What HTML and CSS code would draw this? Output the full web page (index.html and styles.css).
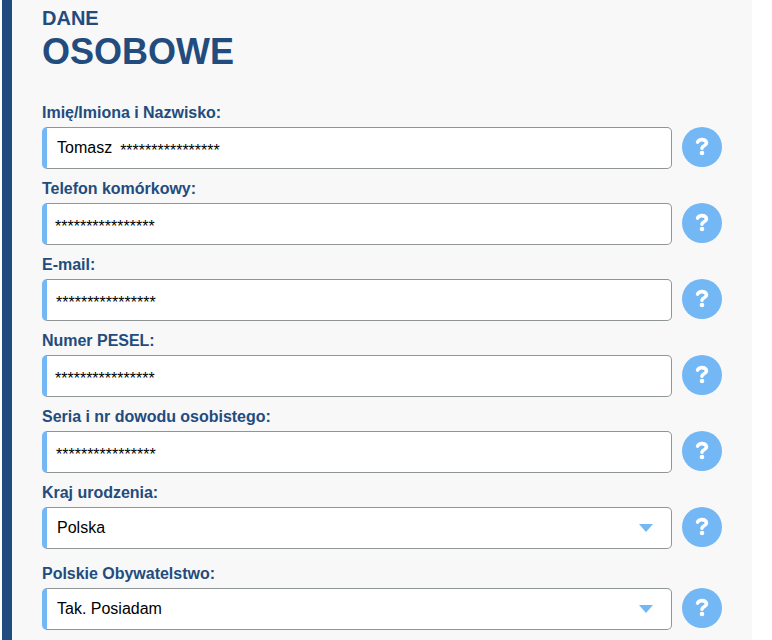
FILE: index.html
```
<!DOCTYPE html>
<html lang="pl">
<head>
<meta charset="utf-8">
<title>Dane osobowe</title>
<link rel="stylesheet" href="styles.css">
</head>
<body>
<svg class="defs" aria-hidden="true">
  <symbol id="help" viewBox="0 0 40 40">
    <path d="M15.6 15.1C16.5 13.2 18 12.6 20 12.6C22.6 12.6 24.5 13.9 24.5 15.9C24.5 18.9 20.2 18.5 20 21.2" fill="none" stroke="#fff" stroke-width="3.6" stroke-linecap="round"/>
    <circle cx="20" cy="26" r="2.3" fill="#fff"/>
  </symbol>
  <symbol id="arrow" viewBox="0 0 14 8"><path d="M0 0H14L7 8Z" fill="#73b7f5"/></symbol>
</svg>
<main class="panel">
  <h1 class="title"><span class="title-small">DANE</span><span class="title-large">OSOBOWE</span></h1>
  <form class="form">
    <div class="row">
      <div class="label">Imię/Imiona i Nazwisko:</div>
      <div class="line"><div class="field"><span>Tomasz</span><span class="mask mask-after">****************</span></div><span class="help"><svg><use href="#help"/></svg></span></div>
    </div>
    <div class="row">
      <div class="label">Telefon komórkowy:</div>
      <div class="line"><div class="field"><span class="mask mask-tight">****************</span></div><span class="help"><svg><use href="#help"/></svg></span></div>
    </div>
    <div class="row">
      <div class="label">E-mail:</div>
      <div class="line"><div class="field"><span class="mask">****************</span></div><span class="help"><svg><use href="#help"/></svg></span></div>
    </div>
    <div class="row">
      <div class="label">Numer PESEL:</div>
      <div class="line"><div class="field"><span class="mask mask-tight">****************</span></div><span class="help"><svg><use href="#help"/></svg></span></div>
    </div>
    <div class="row">
      <div class="label">Seria i nr dowodu osobistego:</div>
      <div class="line"><div class="field"><span class="mask">****************</span></div><span class="help"><svg><use href="#help"/></svg></span></div>
    </div>
    <div class="row row-select">
      <div class="label">Kraj urodzenia:</div>
      <div class="line"><div class="field"><span>Polska</span><svg class="arrow"><use href="#arrow"/></svg></div><span class="help"><svg><use href="#help"/></svg></span></div>
    </div>
    <div class="row row-select">
      <div class="label">Polskie Obywatelstwo:</div>
      <div class="line"><div class="field"><span>Tak. Posiadam</span><svg class="arrow"><use href="#arrow"/></svg></div><span class="help"><svg><use href="#help"/></svg></span></div>
    </div>
  </form>
</main>
<aside class="side"></aside>
</body>
</html>
```
FILE: styles.css
```
* { box-sizing: border-box; }
body {
  margin: 0;
  height: 640px;
  overflow: hidden;
  display: flex;
  background: #fff;
  color: #000;
  font: 16px/20px "Liberation Sans", Arial, sans-serif;
}
.defs { display: none; }
.panel {
  width: 750px;
  height: 640px;
  margin-left: 2px;
  padding: 6px 30px 0;
  border-left: 10px solid #234c7e;
  background: #f8f8f8;
  overflow: hidden;
}
.title { margin: 0; color: #234c7e; font-weight: bold; }
.title-small { display: block; font-size: 20px; line-height: 24px; }
.title-large { display: block; font-size: 36px; line-height: 44px; }
.form { margin-top: 28px; }
.row { height: 76px; }
.row-select { height: 81px; }
.label { height: 25px; color: #234c7e; font-weight: bold; line-height: 22px; letter-spacing: -0.02px; }
.line { display: flex; gap: 10px; }
.field {
  width: 630px;
  height: 42px;
  display: flex;
  align-items: center;
  padding: 0 18px 0 10px;
  border: 1px solid #909595;
  border-left: 5px solid #73b7f5;
  border-radius: 5px;
  background: #fff;
}
.mask { padding-top: 6px; margin-left: -1px; }
.mask-tight { margin-left: -2px; }
.mask-after { margin-left: 8px; }
.arrow { width: 14px; height: 8px; margin: 0 0 1px auto; }
.help { width: 40px; height: 40px; border-radius: 50%; background: #73b7f5; }
.help svg { display: block; width: 40px; height: 40px; }
.side { width: 2px; height: 463px; margin-left: 18px; background: #fcfdff; }
```
